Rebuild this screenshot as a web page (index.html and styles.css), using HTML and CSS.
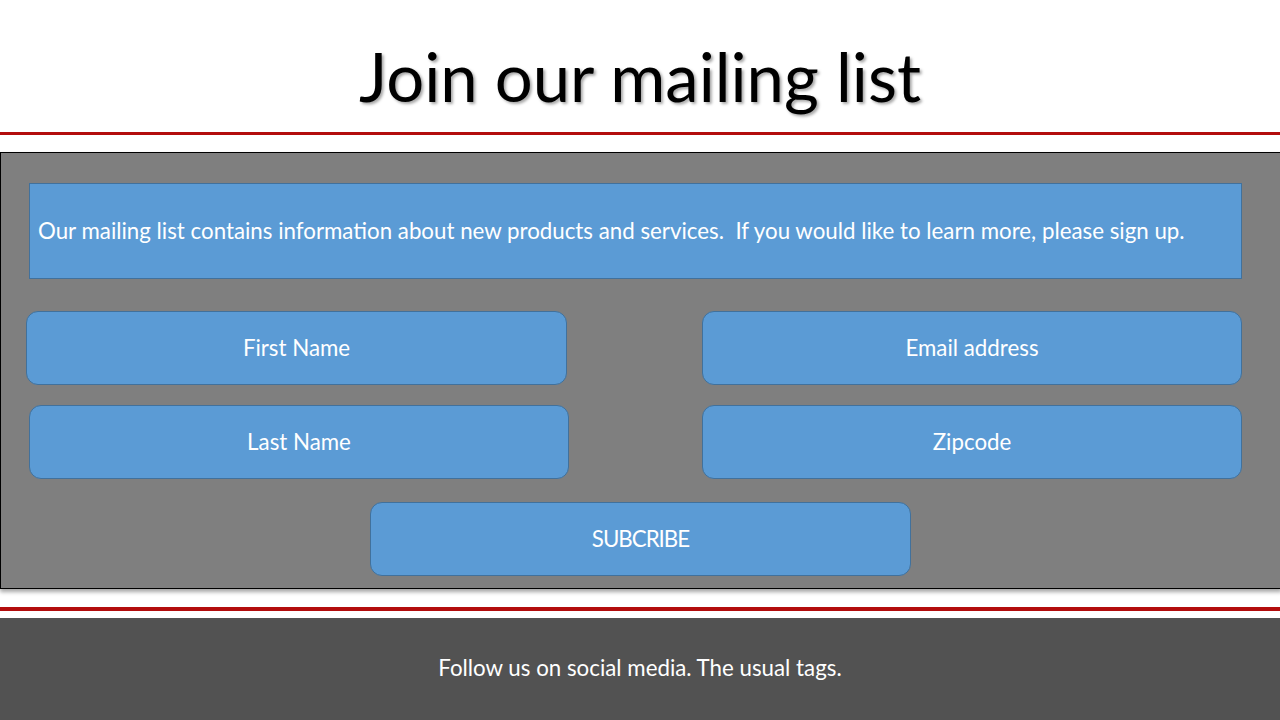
FILE: index.html
```html
<!DOCTYPE html>
<html lang="en">
<head>
<meta charset="utf-8">
<title>Join our mailing list</title>
<link rel="stylesheet" href="styles.css">
</head>
<body>
<div class="slide">
  <header class="header">
    <h1 class="title">Join our mailing list</h1>
  </header>
  <div class="rule rule-top"></div>
  <section class="panel">
    <div class="info">Our mailing list contains information about new products and services. &nbsp;If you would like to learn more, please sign up.</div>
    <div class="fields">
      <div class="field field-first">First Name</div>
      <div class="field">Email address</div>
      <div class="field field-last">Last Name</div>
      <div class="field">Zipcode</div>
    </div>
    <div class="field subscribe">SUBCRIBE</div>
  </section>
  <div class="rule rule-bottom"></div>
  <footer class="footer">Follow us on social media. The usual tags.</footer>
</div>
</body>
</html>
```
FILE: styles.css
```css
html, body {
  margin: 0;
  padding: 0;
  background: #ffffff;
}
body {
  font-family: Lato, "Open Sans", "Liberation Sans", sans-serif;
  width: 1280px;
  height: 720px;
  overflow: hidden;
}
.slide {
  display: flex;
  flex-direction: column;
  width: 1280px;
  height: 720px;
}
.header {
  height: 132px;
  display: flex;
  justify-content: center;
  align-items: flex-start;
}
.title {
  margin: 36px 0 0;
  font-weight: 400;
  font-size: 67px;
  line-height: 80px;
  color: #000;
  text-shadow: 2px 2px 3px rgba(0,0,0,0.35);
}
.rule {
  background: #b30d0d;
  height: 3px;
}
.rule-top {
  margin-bottom: 17px;
}
.panel {
  box-sizing: border-box;
  width: 1282px;
  height: 437px;
  background: #7f7f7f;
  border: 1px solid #000;
  border-right: none;
  box-shadow: 0 3px 4px rgba(0,0,0,0.35);
  display: flex;
  flex-direction: column;
  padding-top: 30px;
}
.info {
  box-sizing: border-box;
  margin-left: 28px;
  width: 1213px;
  height: 96px;
  background: #5b9bd5;
  border: 1px solid #41719c;
  color: #fff;
  font-size: 22.3px;
  display: flex;
  align-items: center;
  padding-left: 8px;
  padding-bottom: 2px;
  white-space: nowrap;
}
.fields {
  margin-top: 32px;
  margin-left: 28px;
  display: grid;
  grid-template-columns: 540px 540px;
  column-gap: 133px;
  row-gap: 20px;
}
.field {
  box-sizing: border-box;
  height: 74px;
  background: #5b9bd5;
  border: 1px solid #41719c;
  border-radius: 12px;
  color: #fff;
  font-size: 22.3px;
  display: flex;
  align-items: center;
  justify-content: center;
  padding-bottom: 2px;
}
.field-first {
  margin-left: -3px;
  margin-right: 2px;
}
.subscribe {
  width: 541px;
  margin: 23px 0 0 369px;
  letter-spacing: -1px;
}
.rule-bottom {
  margin-top: 18px;
  height: 4px;
}
.footer {
  margin-top: 7px;
  flex: 1;
  background: #525252;
  color: #fff;
  font-size: 22.3px;
  display: flex;
  justify-content: center;
  align-items: center;
  padding-bottom: 4px;
}
```
